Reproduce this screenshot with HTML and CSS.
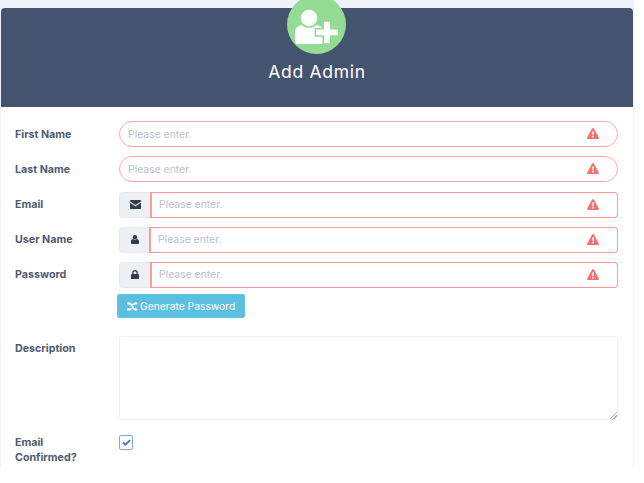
FILE: index.html
```html
<!DOCTYPE html>
<html lang="en">
<head>
<meta charset="utf-8">
<title>Add Admin</title>
<link rel="stylesheet" href="styles.css">
</head>
<body>
<div class="frame">
  <section class="card">
    <header class="card-head">
      <div class="avatar">
        <svg class="avatar-icon" viewBox="0 0 45 36" width="45" height="36">
          <circle cx="14" cy="10" r="8.300" fill="#fff"/>
          <path d="M0 33v-9c0-4 3-6 6.500-7 2 2 4.500 3 7.500 3s5.500-1 7.500-3c3 .8 5.500 2.200 6 4v15H3c-1.800 0-3-1.200-3-3z" fill="#fff"/>
          <path d="M28.300 13h7.400v7.700h8v7.400h-8v7.900h-7.400v-7.900h-8v-7.400h8z" fill="#fff" stroke="#94dc94" stroke-width="1.500"/>
        </svg>
      </div>
      <h1 class="card-title">Add Admin</h1>
    </header>
    <form class="form">
      <div class="row">
        <label class="label">First Name</label>
        <div class="field">
          <input class="input pill" placeholder="Please enter.">
          <svg class="warn" viewBox="0 0 12 11" width="12" height="11"><path d="M6 0c.4 0 .7.200.9.500l4.900 8.900c.4.700-.1 1.600-.9 1.600H1.100c-.8 0-1.300-.9-.9-1.600L5.100.500C5.300.200 5.600 0 6 0z" fill="#f8706f"/><path d="M5.100 3.400h1.800L6.600 7.200H5.400zM5.200 8h1.600v1.500H5.200z" fill="#fff"/></svg>
        </div>
      </div>
      <div class="row">
        <label class="label">Last Name</label>
        <div class="field">
          <input class="input pill" placeholder="Please enter.">
          <svg class="warn" viewBox="0 0 12 11" width="12" height="11"><path d="M6 0c.4 0 .7.200.9.500l4.900 8.900c.4.700-.1 1.600-.9 1.600H1.100c-.8 0-1.300-.9-.9-1.600L5.100.500C5.300.200 5.600 0 6 0z" fill="#f8706f"/><path d="M5.100 3.400h1.800L6.600 7.200H5.400zM5.200 8h1.600v1.500H5.200z" fill="#fff"/></svg>
        </div>
      </div>
      <div class="row">
        <label class="label">Email</label>
        <div class="group">
          <span class="addon addon-wide">
            <svg viewBox="0 0 11 9" width="11" height="9"><path d="M0 1c0-.6.400-1 1-1h9c.6 0 1 .4 1 1v.5L5.500 5 0 1.500zM0 2.800l5.500 3.500L11 2.800V8c0 .6-.4 1-1 1H1c-.6 0-1-.4-1-1z" fill="#333c4e"/></svg>
          </span>
          <div class="field">
            <input class="input box" placeholder="Please enter.">
            <svg class="warn" viewBox="0 0 12 11" width="12" height="11"><path d="M6 0c.4 0 .7.200.9.500l4.900 8.900c.4.700-.1 1.600-.9 1.600H1.100c-.8 0-1.300-.9-.9-1.600L5.100.500C5.300.200 5.600 0 6 0z" fill="#f8706f"/><path d="M5.100 3.400h1.800L6.600 7.200H5.400zM5.200 8h1.600v1.500H5.200z" fill="#fff"/></svg>
          </div>
        </div>
      </div>
      <div class="row">
        <label class="label">User Name</label>
        <div class="group">
          <span class="addon">
            <svg viewBox="0 0 8 9" width="8" height="9"><circle cx="4" cy="2.300" r="2.200" fill="#333c4e"/><path d="M0 8v-1.800C0 5 .9 4.300 2 4.100c.5.500 1.200.8 2 .8s1.500-.3 2-.8c1.100.2 2 .9 2 2.100V8c0 .6-.4 1-1 1H1c-.6 0-1-.4-1-1z" fill="#333c4e"/></svg>
          </span>
          <div class="field">
            <input class="input box" placeholder="Please enter.">
            <svg class="warn" viewBox="0 0 12 11" width="12" height="11"><path d="M6 0c.4 0 .7.200.9.500l4.900 8.900c.4.700-.1 1.600-.9 1.600H1.100c-.8 0-1.300-.9-.9-1.600L5.100.500C5.300.200 5.600 0 6 0z" fill="#f8706f"/><path d="M5.100 3.400h1.800L6.600 7.200H5.400zM5.200 8h1.600v1.500H5.200z" fill="#fff"/></svg>
          </div>
        </div>
      </div>
      <div class="row">
        <label class="label">Password</label>
        <div class="group">
          <span class="addon addon-wide">
            <svg viewBox="0 0 8 9" width="8" height="9"><path d="M1.200 4V2.800a2.800 2.800 0 0 1 5.600 0V4h.2c.6 0 1 .4 1 1v3c0 .6-.4 1-1 1H1c-.6 0-1-.4-1-1V5c0-.6.400-1 1-1zm1.300 0h3V2.800a1.500 1.500 0 0 0-3 0z" fill="#333c4e"/></svg>
          </span>
          <div class="field">
            <input class="input box" placeholder="Please enter.">
            <svg class="warn" viewBox="0 0 12 11" width="12" height="11"><path d="M6 0c.4 0 .7.200.9.500l4.900 8.900c.4.700-.1 1.600-.9 1.600H1.100c-.8 0-1.300-.9-.9-1.600L5.100.500C5.300.200 5.600 0 6 0z" fill="#f8706f"/><path d="M5.100 3.400h1.800L6.600 7.200H5.400zM5.200 8h1.600v1.500H5.200z" fill="#fff"/></svg>
          </div>
        </div>
      </div>
      <div class="actions">
        <button type="button" class="btn">
          <svg viewBox="0 0 11 9" width="11" height="9"><path d="M0 1.500h2.200c1.800 0 2.600 1.400 3.200 3s1.200 3 2.800 3H9M0 7.500h2.200c1 0 1.700-.5 2.200-1.200M6 2.700c.5-.7 1.200-1.200 2.200-1.200H9" fill="none" stroke="#fff" stroke-width="1.800"/><path d="M8.600 0L11 1.500 8.600 3zM8.600 6L11 7.500 8.600 9z" fill="#fff"/></svg>
          Generate Password
        </button>
      </div>
      <div class="row row-top">
        <label class="label label-top">Description</label>
        <textarea class="textarea"></textarea>
      </div>
      <div class="row row-top row-check">
        <label class="label label-wrap">Email Confirmed?</label>
        <span class="check">
          <svg viewBox="0 0 9 7" width="9" height="7"><path d="M1 3.500L3.400 5.700 8 1.200" fill="none" stroke="#2a7fd0" stroke-width="1.800"/></svg>
        </span>
      </div>
    </form>
  </section>
</div>
</body>
</html>
```

FILE: styles.css
```css
* {
  box-sizing: border-box;
}

html,
body {
  margin: 0;
  padding: 0;
  background: #fff;
}

body {
  font-family: Inter, "Open Sans", sans-serif;
}

.frame {
  width: 634px;
  height: 467px;
  overflow: hidden;
  background: #eef2fa;
  padding: 8px 1px 0;
}

.card {
  background: #fff;
  border-radius: 4px 4px 0 0;
}

.card-head {
  position: relative;
  height: 99px;
  background: #44536e;
  border-radius: 4px 4px 0 0;
  display: flex;
  justify-content: center;
  padding-top: 53px;
}

.avatar {
  position: absolute;
  left: 286px;
  top: -13px;
  width: 59px;
  height: 59px;
  border-radius: 50%;
  background: #94dc94;
  display: flex;
  align-items: flex-start;
  justify-content: flex-start;
  padding: 13px 0 0 8px;
}

.card-title {
  margin: 0;
  font-size: 17.500px;
  line-height: 22px;
  font-weight: 400;
  letter-spacing: 0.700px;
  color: #fff;
}

.form {
  padding: 14.200px 15px 0 14px;
  display: flex;
  flex-direction: column;
}

.row {
  display: flex;
  align-items: center;
  height: 26px;
  margin-bottom: 9.200px;
}

.row-top {
  align-items: flex-start;
  height: auto;
}

.row-check {
  margin-top: 6.600px;
}

.label {
  flex: 0 0 104px;
  font-size: 10.700px;
  font-weight: 700;
  color: #4f5b72;
}

.label-top {
  padding-top: 6px;
}

.label-wrap {
  width: 104px;
  padding-right: 30px;
  line-height: 15px;
}

.field {
  position: relative;
  flex: 1;
  min-width: 0;
}

.group {
  flex: 1;
  display: flex;
  min-width: 0;
}

.input {
  display: block;
  width: 100%;
  height: 26px;
  background: #fff;
  font-family: inherit;
  font-size: 10.400px;
  color: #4f5b72;
  outline: none;
}

.input::placeholder {
  color: #bcc1ce;
  opacity: 1;
}

.pill {
  border: 1.500px solid #ffaaaa;
  border-radius: 13px;
  padding: 0 30px 0 8px;
}

.box {
  border: 1.500px solid #fc9999;
  border-left-width: 2px;
  border-radius: 0 4px 4px 0;
  padding: 0 30px 0 7px;
}

.warn {
  position: absolute;
  right: 19px;
  top: 7px;
}

.addon {
  flex: 0 0 30px;
  display: flex;
  align-items: center;
  justify-content: center;
  background: #eef1f3;
  border: 1px solid #e8ebee;
  border-right: 0;
  border-radius: 4px 0 0 4px;
}

.addon-wide {
  flex-basis: 31px;
}

.actions {
  margin: -3px 0 18px 101.500px;
}

.btn {
  display: flex;
  align-items: center;
  gap: 2px;
  height: 24px;
  width: 128px;
  padding: 0 0 0 9.500px;
  background: #5bc0e0;
  border: 1px solid #61c5e4;
  border-radius: 2px;
  color: #fff;
  font-family: inherit;
  font-size: 10.300px;
  white-space: nowrap;
}

.textarea {
  flex: 1;
  display: block;
  height: 83.500px;
  border: 1px solid #eef0f3;
  border-radius: 3px;
  background: #fff;
  outline: none;
}

.textarea::-webkit-resizer {
  background: linear-gradient(135deg, transparent 45%, #b5b5b5 45%, #b5b5b5 55%, transparent 55%, transparent 70%, #b5b5b5 70%, #b5b5b5 80%, transparent 80%) no-repeat right bottom / 7px 7px;
}

.check {
  width: 14px;
  height: 15px;
  display: flex;
  align-items: center;
  justify-content: center;
  background: #fff;
  border: 1px solid #7fa9d0;
  border-radius: 2px;
}
```
